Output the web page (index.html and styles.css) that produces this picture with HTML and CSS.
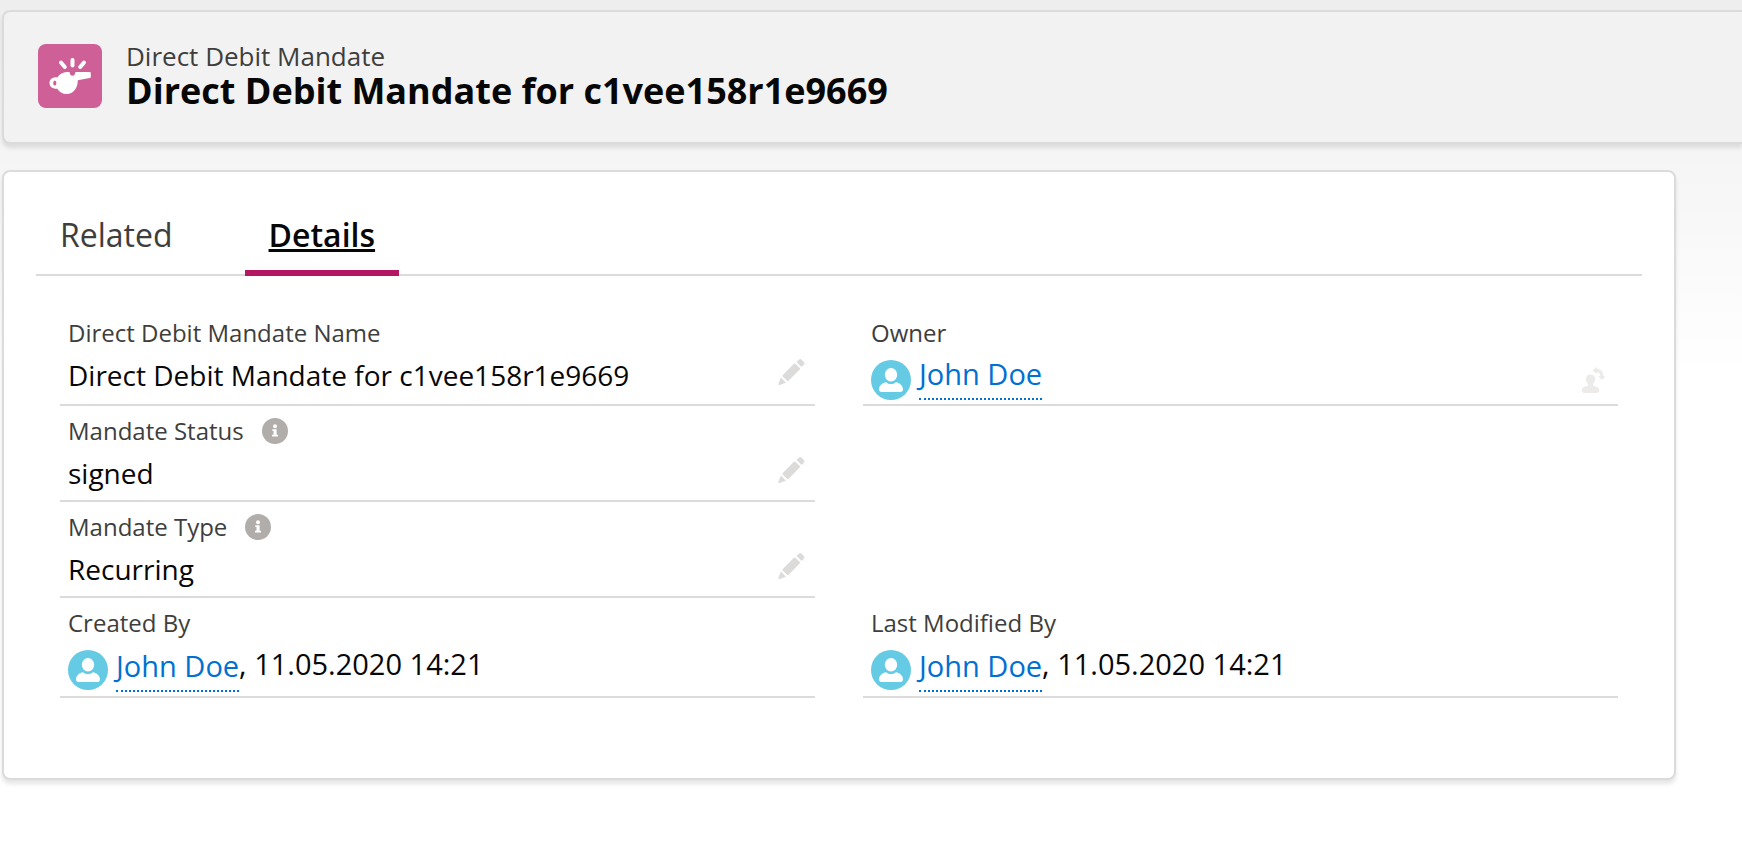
FILE: index.html
```html
<!DOCTYPE html>
<html lang="en">
<head>
    <meta charset="UTF-8">
    <meta name="viewport" content="width=device-width, initial-scale=1.0">
    <title>Direct Debit Mandate for c1vee158r1e9669</title>
    <link rel="stylesheet" href="styles.css">
</head>
<body>
    <!-- Shared icons -->
    <svg class="sprite" aria-hidden="true">
        <symbol id="pencil" viewBox="0 0 28 28">
            <path d="M5.800 17L17 5.800a1 1 0 0 1 1.400 0L22.700 10.100a1 1 0 0 1 0 1.400L11.500 22.700a1 1 0 0 1-1.400 0L5.800 18.400a1 1 0 0 1 0-1.400z"/>
            <path d="M20 3.500l1.800-1.800a2 2 0 0 1 2.800 0l2.200 2.200a2 2 0 0 1 0 2.800L25 8.500a.7.7 0 0 1-1 0l-4-4a.7.7 0 0 1 0-1z"/>
            <path d="M3.800 19.600l5.100 5.100-6.400 2.400c-.8.300-1.400-.300-1.100-1.100z"/>
        </symbol>
        <symbol id="info" viewBox="0 0 26 26">
            <circle cx="13" cy="13" r="13" fill="#b0adab"/>
            <circle cx="13" cy="8.200" r="2" fill="#fff"/>
            <path d="M10.300 11.300h4.300v5.400h1.400v1.800h-6v-1.800h1.500v-3.600h-1.200z" fill="#fff"/>
        </symbol>
        <symbol id="user" viewBox="0 0 40 40">
            <circle cx="20" cy="20" r="20" fill="#65cae4"/>
            <ellipse cx="20" cy="14.700" rx="6.200" ry="6.700" fill="#fff"/>
            <path d="M8 29.500c0-4.500 4-6.800 7-7.300 1.600 1.300 3.200 1.800 5 1.800s3.400-.5 5-1.800c3 .5 7 2.800 7 7.300 0 1.500-1 2.500-2.500 2.500h-19C9 32 8 31 8 29.500z" fill="#fff"/>
        </symbol>
    </svg>

    <header class="page-header">
        <svg class="object-icon" viewBox="0 0 64 64" aria-hidden="true">
            <g stroke="#fff" stroke-width="4" stroke-linecap="round">
                <path d="M23 18.500l3.800 4.500"/>
                <path d="M34.500 16v5.500"/>
                <path d="M46 18.500L42.200 23"/>
            </g>
            <path fill="#fff" d="M24 29.200c1.700-.8 3.500-1.200 7.500-1.200.3 2.200 1.200 3.800 3 3.800s2.500-1.800 2.800-3.300c.1-.4.400-.5.700-.5h13.500c.8 0 1.300.5 1.300 1.300v3.400c0 .8-.4 1.200-1.200 1.300L39.800 36.200c.1 7.800-4.500 13.800-11 13.800-4.500 0-7.600-2.100-9.500-5.300-4.400.3-7.800-1.700-7.800-5.700 0-4.200 3.800-6.300 8-5.600 1.100-1.900 2.600-3.300 4.500-4.200z"/>
            <ellipse cx="16.800" cy="39" rx="1.600" ry="2.500" fill="#cf5f97"/>
        </svg>
        <div>
            <p class="object-name">Direct Debit Mandate</p>
            <h1>Direct Debit Mandate for c1vee158r1e9669</h1>
        </div>
    </header>

    <main class="card">
        <nav class="tabs">
            <a class="tab" href="#related">Related</a>
            <a class="tab active" href="#details" aria-current="page">Details</a>
        </nav>

        <section class="fields" id="details">
            <div class="field">
                <div class="label">Direct Debit Mandate Name</div>
                <div class="value">
                    <span>Direct Debit Mandate for c1vee158r1e9669</span>
                    <button class="edit" type="button" aria-label="Edit Direct Debit Mandate Name"><svg><use href="#pencil"/></svg></button>
                </div>
            </div>
            <div class="field">
                <div class="label">Owner</div>
                <div class="value user">
                    <svg class="avatar" aria-hidden="true"><use href="#user"/></svg>
                    <a href="#john-doe">John Doe</a>
                    <button class="edit change-owner" type="button" aria-label="Change Owner">
                        <svg viewBox="0 0 28 28">
                            <path d="M10.500 8.500c2.800 0 4.600 2 4.600 4.800 0 1.800-.8 3.200-1.900 4.500-.5.700-.3 1.500.5 1.900l3.300 1.300c1.400.6 2.300 1.700 2.300 3.200 0 1.700-1 2.800-2.600 2.800H4.400C2.800 27 1.800 25.900 1.800 24.200c0-1.500.9-2.600 2.300-3.200l3.300-1.300c.8-.4 1-1.200.5-1.900C6.800 16.500 6 15.100 6 13.300c0-2.800 1.700-4.800 4.500-4.800z"/>
                            <path d="M12.500 4.500L17 1v2c4 0 6.500 3 6.500 7h2L22 14l-3.800-4h2c0-2.400-1-3.800-3.200-3.800V8z"/>
                        </svg>
                    </button>
                </div>
            </div>

            <div class="field">
                <div class="label">Mandate Status
                    <button class="help" type="button" aria-label="Help Mandate Status"><svg><use href="#info"/></svg></button>
                </div>
                <div class="value">
                    <span>signed</span>
                    <button class="edit" type="button" aria-label="Edit Mandate Status"><svg><use href="#pencil"/></svg></button>
                </div>
            </div>

            <div class="field left">
                <div class="label">Mandate Type
                    <button class="help" type="button" aria-label="Help Mandate Type"><svg><use href="#info"/></svg></button>
                </div>
                <div class="value">
                    <span>Recurring</span>
                    <button class="edit" type="button" aria-label="Edit Mandate Type"><svg><use href="#pencil"/></svg></button>
                </div>
            </div>

            <div class="field left">
                <div class="label">Created By</div>
                <div class="value user stamp">
                    <svg class="avatar" aria-hidden="true"><use href="#user"/></svg>
                    <a href="#john-doe">John Doe</a><span>, 11.05.2020 14:21</span>
                </div>
            </div>
            <div class="field">
                <div class="label">Last Modified By</div>
                <div class="value user stamp">
                    <svg class="avatar" aria-hidden="true"><use href="#user"/></svg>
                    <a href="#john-doe">John Doe</a><span>, 11.05.2020 14:21</span>
                </div>
            </div>
        </section>
    </main>
</body>
</html>
```
FILE: styles.css
```css
* {
    box-sizing: border-box;
}
body {
    margin: 0;
    padding: 10px 0 24px 2px;
    font-family: 'Open Sans', 'Noto Sans', sans-serif;
    font-size: 28px;
    color: #080707;
    background: #fff linear-gradient(#eee, #fff 370px) no-repeat;
}
p, h1 {
    margin: 0;
}
button {
    padding: 0;
    border: none;
    background: none;
    cursor: pointer;
}
button svg {
    display: block;
    width: 100%;
    height: 100%;
}
.sprite {
    display: none;
}

/* Header */
.page-header {
    display: flex;
    gap: 24px;
    padding: 32px 34px 28px;
    background-color: #f2f2f2;
    border: 2px solid #dddbda;
    border-right: none;
    border-radius: 8px 0 0 8px;
    box-shadow: 0 4px 4px rgba(0, 0, 0, 0.1);
}
.object-icon {
    width: 64px;
    height: 64px;
    border-radius: 8px;
    background-color: #cf5f97;
}
.object-name {
    font-size: 26px;
    line-height: 24px;
    color: #3e3e3c;
}
h1 {
    font-size: 36px;
    line-height: 46px;
    font-weight: bold;
}

/* Card */
.card {
    margin: 26px 66px 0 0;
    padding: 24px 32px 80px;
    background-color: #fff;
    border: 2px solid #dddbda;
    border-radius: 8px;
    box-shadow: 0 4px 4px rgba(0, 0, 0, 0.1);
}
.tabs {
    display: flex;
    gap: 48px;
    box-shadow: inset 0 -2px #dddbda;
}
.tab {
    padding: 4px 24px 0;
    font-size: 32px;
    line-height: 70px;
    border-bottom: 6px solid transparent;
    color: #3e3e3c;
    text-decoration: none;
}
.tab.active {
    color: #080707;
    font-weight: 600;
    text-decoration: underline;
    border-color: #b41863;
}

/* Fields */
.fields {
    display: grid;
    grid-template-columns: 1fr 1fr;
    column-gap: 48px;
    padding: 32px 24px 0;
}
.field {
    padding: 8px 8px 0;
    border-bottom: 2px solid #dddbda;
}
.field.left {
    grid-column: 1;
}
.label {
    display: flex;
    align-items: center;
    gap: 18px;
    font-size: 24px;
    line-height: 34px;
    color: #3e3e3c;
}
.value {
    display: flex;
    align-items: flex-start;
    padding-bottom: 2px;
    line-height: 50px;
}
.value.user {
    padding-bottom: 4px;
    font-size: 29px;
    line-height: 48px;
}
.value a {
    border-bottom: 2px dotted #0070d2;
    color: #0070d2;
    text-decoration: none;
}
.stamp a {
    margin-top: 2px;
}
.avatar {
    width: 40px;
    height: 40px;
    margin: 10px 8px 0 0;
}
.help {
    width: 26px;
    height: 26px;
}
.edit {
    width: 28px;
    height: 28px;
    margin: 8px 2px 0 auto;
    fill: #dddbda;
}
.change-owner {
    margin-top: 16px;
    fill: #ecebea;
}
```
